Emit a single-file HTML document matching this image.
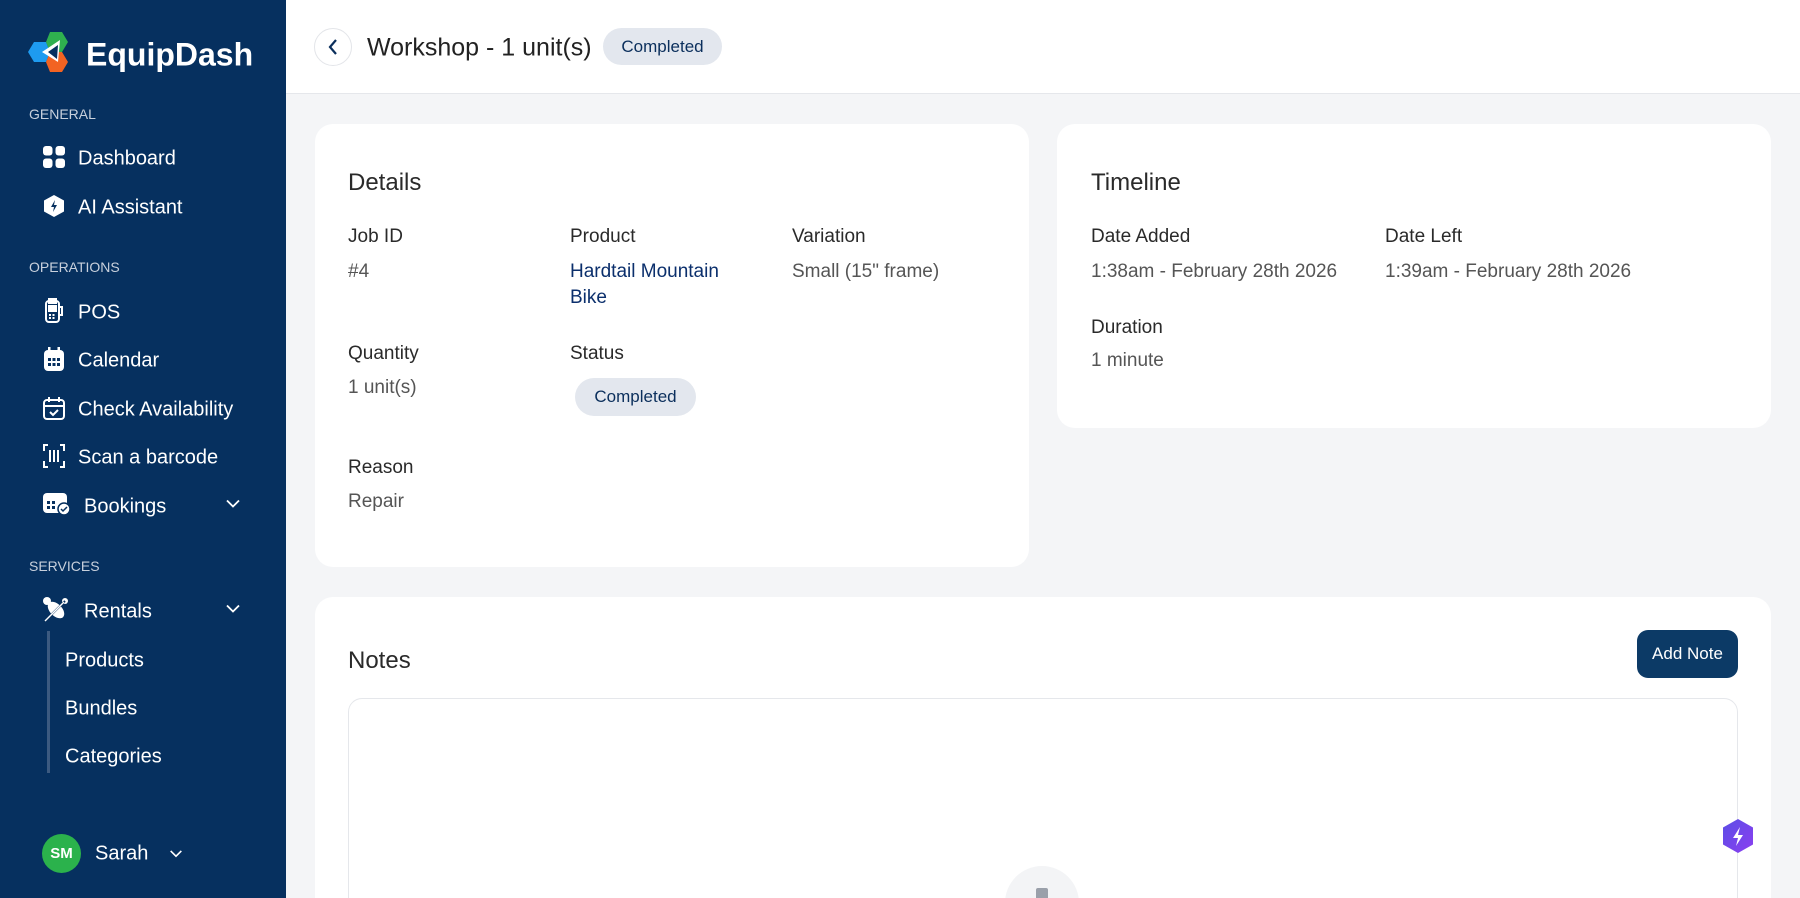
<!DOCTYPE html>
<html><head><meta charset="utf-8"><style>
*{margin:0;padding:0;box-sizing:border-box}
html,body{width:1800px;height:898px;overflow:hidden}
body{font-family:"Liberation Sans",sans-serif;background:#f4f5f7;position:relative;color:#222}
.sb{position:absolute;left:0;top:0;width:286px;height:898px;background:#06305f}
.abs{position:absolute;white-space:nowrap}
.sec{color:#c8d0dc;font-size:14px;left:29px}
.it{color:#fff;font-size:20px;left:78px;transform:translateY(-50%);margin-top:2px}
.ic{position:absolute;transform:translate(-50%,-50%)}
.hdr{position:absolute;left:286px;top:0;right:0;height:94px;background:#fff;border-bottom:1px solid #e5e7eb}
.card{position:absolute;background:#fff;border-radius:18px}
.h{font-size:24px;color:#2a2a2a;transform:translateY(-50%);margin-top:2px}
.lb{font-size:19px;color:#2a2a2a;transform:translateY(-50%);margin-top:2px}
.vl{font-size:19px;color:#555;transform:translateY(-50%);margin-top:2px}
.badge{position:absolute;background:#e3e7ee;border-radius:20px;color:#0b2f5c;font-size:17px;display:flex;align-items:center;justify-content:center}
</style></head><body>
<div class="sb">
<svg class="abs" style="left:28px;top:31px" width="44" height="42" viewBox="0 0 44 42">
<polygon points="0,21 6,11 18,11 22,21 18,31 6,31" fill="#1e9bf0"/>
<polygon points="18,11 22,1 34,1 40,11 34,21 22,21" fill="#2fb04f"/>
<polygon points="18,31 22,21 34,21 40,31 34,41 22,41" fill="#f26322"/>
<polygon points="14,21 32,9 30,31" fill="#fff"/>
<polygon points="20,21 30,14 29,28" fill="#06305f"/>
</svg>
<div class="abs" style="left:86px;top:55px;transform:translateY(-50%);color:#fff;font-size:32px;font-weight:bold">EquipDash</div>
<div class="abs sec" style="top:106px">GENERAL</div>
<svg class="ic" style="left:54px;top:157px" width="22" height="22" viewBox="0 0 22 22" fill="#fff"><rect x="0" y="0" width="9.5" height="9.5" rx="3"/><rect x="12.5" y="0" width="9.5" height="9.5" rx="3"/><rect x="0" y="12.5" width="9.5" height="9.5" rx="3"/><rect x="12.5" y="12.5" width="9.5" height="9.5" rx="3"/></svg>
<div class="abs it" style="top:157px">Dashboard</div>
<svg class="ic" style="left:54px;top:206px" width="20" height="22" viewBox="0 0 20 22"><polygon points="10,0 20,5.5 20,16.5 10,22 0,16.5 0,5.5" fill="#fff"/><path d="M11 5 L7 12 H10 L9 17 L13 10 H10 Z" fill="#06305f"/></svg>
<div class="abs it" style="top:206px">AI Assistant</div>
<div class="abs sec" style="top:259px">OPERATIONS</div>
<svg class="ic" style="left:54px;top:311px" width="20" height="26" viewBox="0 0 20 26" fill="none" stroke="#fff" stroke-width="2"><rect x="2" y="3" width="13" height="21" rx="3"/><rect x="5" y="1" width="7" height="4" fill="#fff"/><rect x="5" y="8" width="7" height="5" fill="#fff"/><path d="M15 9 h3 v8 h-3"/><path d="M5 17h7M5 20h7" stroke-dasharray="2 1.5"/></svg>
<div class="abs it" style="top:311px">POS</div>
<svg class="ic" style="left:54px;top:359px" width="20" height="24" viewBox="0 0 20 24"><rect x="0" y="3" width="20" height="21" rx="4" fill="#fff"/><rect x="4" y="0" width="2.5" height="5" fill="#fff"/><rect x="13.5" y="0" width="2.5" height="5" fill="#fff"/><g fill="#06305f"><rect x="4" y="11" width="3" height="3"/><rect x="8.5" y="11" width="3" height="3"/><rect x="13" y="11" width="3" height="3"/><rect x="4" y="16" width="3" height="3"/><rect x="8.5" y="16" width="3" height="3"/><rect x="13" y="16" width="3" height="3"/></g></svg>
<div class="abs it" style="top:359px">Calendar</div>
<svg class="ic" style="left:54px;top:408px" width="22" height="24" viewBox="0 0 22 24" fill="none" stroke="#fff" stroke-width="2"><rect x="1" y="4" width="20" height="19" rx="3"/><path d="M1 10h20M6 1v5M16 1v5M7 16l3 3 5-5"/></svg>
<div class="abs it" style="top:408px">Check Availability</div>
<svg class="ic" style="left:54px;top:456px" width="22" height="24" viewBox="0 0 22 24" fill="none" stroke="#fff" stroke-width="2"><path d="M5 1H1v6M17 1h4v6M5 23H1v-6M17 23h4v-6M7 6v12M11 6v12M15 6v12"/></svg>
<div class="abs it" style="top:456px">Scan a barcode</div>
<svg class="ic" style="left:57px;top:503px" width="28" height="24" viewBox="0 0 28 24"><rect x="0" y="2" width="24" height="20" rx="4" fill="#fff"/><g fill="#06305f"><rect x="4" y="10" width="3" height="3"/><rect x="9" y="10" width="3" height="3"/><rect x="4" y="15" width="3" height="3"/><rect x="9" y="15" width="3" height="3"/></g><circle cx="21" cy="18" r="6" fill="#fff" stroke="#06305f" stroke-width="1.5"/><path d="M18 18l2 2 4-4" stroke="#06305f" stroke-width="1.5" fill="none"/></svg>
<div class="abs it" style="top:505px;left:84px">Bookings</div>
<svg class="ic" style="left:233px;top:504px" width="14" height="9" viewBox="0 0 14 9" fill="none" stroke="#fff" stroke-width="1.8"><path d="M1 1l6 6 6-6"/></svg>
<div class="abs sec" style="top:558px">SERVICES</div>
<svg class="ic" style="left:56px;top:610px" width="26" height="26" viewBox="0 0 26 26" fill="#fff"><ellipse cx="13" cy="13" rx="6" ry="10" transform="rotate(-45 13 13)"/><circle cx="4" cy="4" r="4"/><circle cx="22" cy="4" r="3"/><path d="M2 24L22 4" stroke="#06305f" stroke-width="2"/><path d="M2 24L21 5" stroke="#fff" stroke-width="1.4"/></svg>
<div class="abs it" style="top:610px;left:84px">Rentals</div>
<svg class="ic" style="left:233px;top:609px" width="14" height="9" viewBox="0 0 14 9" fill="none" stroke="#fff" stroke-width="1.8"><path d="M1 1l6 6 6-6"/></svg>
<div class="abs" style="left:47px;top:631px;width:3px;height:142px;background:#3c5a80"></div>
<div class="abs it" style="top:659px;left:65px">Products</div>
<div class="abs it" style="top:707px;left:65px">Bundles</div>
<div class="abs it" style="top:755px;left:65px">Categories</div>
<div class="abs" style="left:42px;top:834px;width:39px;height:39px;border-radius:50%;background:#2bb24c;color:#fff;font-size:15px;font-weight:bold;display:flex;align-items:center;justify-content:center">SM</div>
<div class="abs it" style="top:852px;left:95px">Sarah</div>
<svg class="ic" style="left:176px;top:854px" width="13" height="8" viewBox="0 0 14 9" fill="none" stroke="#fff" stroke-width="1.8"><path d="M1 1l6 6 6-6"/></svg>
</div>

<div class="hdr"></div>
<div class="abs" style="left:314px;top:28px;width:38px;height:38px;border-radius:50%;border:1px solid #e3e5e9;background:#fff"></div>
<svg class="ic" style="left:333px;top:47px" width="10" height="16" viewBox="0 0 10 16" fill="none" stroke="#0b2f5c" stroke-width="2.2"><path d="M8 1L2 8l6 7"/></svg>
<div class="abs" style="left:367px;top:48px;transform:translateY(-50%);font-size:25px;color:#222">Workshop - 1 unit(s)</div>
<div class="badge" style="left:603px;top:28px;width:119px;height:37px">Completed</div>

<div class="card" style="left:315px;top:124px;width:714px;height:443px"></div>
<div class="abs h" style="left:348px;top:181px">Details</div>
<div class="abs lb" style="left:348px;top:235px">Job ID</div>
<div class="abs vl" style="left:348px;top:270px">#4</div>
<div class="abs lb" style="left:570px;top:235px">Product</div>
<div class="abs vl" style="left:570px;top:270px;color:#0b2f6c">Hardtail Mountain</div>
<div class="abs vl" style="left:570px;top:296px;color:#0b2f6c">Bike</div>
<div class="abs lb" style="left:792px;top:235px">Variation</div>
<div class="abs vl" style="left:792px;top:270px">Small (15" frame)</div>
<div class="abs lb" style="left:348px;top:352px">Quantity</div>
<div class="abs vl" style="left:348px;top:386px">1 unit(s)</div>
<div class="abs lb" style="left:570px;top:352px">Status</div>
<div class="badge" style="left:575px;top:378px;width:121px;height:38px">Completed</div>
<div class="abs lb" style="left:348px;top:466px">Reason</div>
<div class="abs vl" style="left:348px;top:500px">Repair</div>

<div class="card" style="left:1057px;top:124px;width:714px;height:304px"></div>
<div class="abs h" style="left:1091px;top:181px">Timeline</div>
<div class="abs lb" style="left:1091px;top:235px">Date Added</div>
<div class="abs vl" style="left:1091px;top:270px">1:38am - February 28th 2026</div>
<div class="abs lb" style="left:1385px;top:235px">Date Left</div>
<div class="abs vl" style="left:1385px;top:270px">1:39am - February 28th 2026</div>
<div class="abs lb" style="left:1091px;top:326px">Duration</div>
<div class="abs vl" style="left:1091px;top:359px">1 minute</div>

<div class="card" style="left:315px;top:597px;width:1456px;height:320px"></div>
<div class="abs h" style="left:348px;top:659px">Notes</div>
<div class="abs" style="left:1637px;top:630px;width:101px;height:48px;background:#0c3a66;border-radius:11px;color:#fff;font-size:17px;display:flex;align-items:center;justify-content:center">Add Note</div>
<div class="abs" style="left:348px;top:698px;width:1390px;height:240px;border:1px solid #e5e7eb;border-radius:14px;background:#fff"></div>
<div class="abs" style="left:1005px;top:866px;width:74px;height:74px;border-radius:50%;background:#f3f4f6"></div>
<div class="abs" style="left:1036px;top:888px;width:12px;height:12px;background:#9aa0aa;border-radius:2px"></div>
<svg class="ic" style="left:1738px;top:836px" width="30" height="34" viewBox="0 0 30 34"><defs><linearGradient id="g" x1="0" y1="0" x2="1" y2="1"><stop offset="0" stop-color="#5b4ee6"/><stop offset="1" stop-color="#8b3ff0"/></linearGradient></defs><polygon points="15,0 30,8.5 30,25.5 15,34 0,25.5 0,8.5" fill="url(#g)"/><path d="M17 8L10 19h5l-2 8 7-11h-5z" fill="#fff"/></svg>
</body></html>
